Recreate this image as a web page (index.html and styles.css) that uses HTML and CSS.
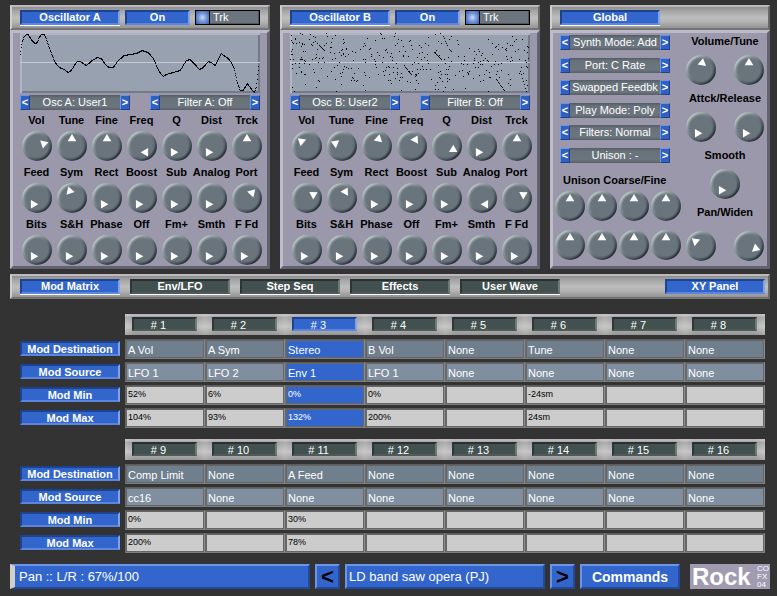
FILE: index.html
```html
<!DOCTYPE html>
<html lang="en">
<head>
<meta charset="utf-8">
<title>Synth Editor</title>
<link rel="stylesheet" href="styles.css">
</head>
<body>
<main class="synth">
  <div class="panels">
    <section class="panel" aria-label="Oscillator A">
      <header class="metal panel-head">
        <button class="key key-blue key-lit">Oscillator A</button>
        <button class="key key-blue key-on">On</button>
        <label class="track"><input type="checkbox"><span>Trk</span></label>
      </header>
      <div class="panel-body">
        <svg class="scope" id="scope-a" viewBox="0 0 240 60" preserveAspectRatio="none" role="img" aria-label="Waveform A"></svg>
        <div class="selectors">
          <div class="selector"><button aria-label="Previous oscillator">&lt;</button><span>Osc A: User1</span><button aria-label="Next oscillator">&gt;</button></div>
          <div class="selector"><button aria-label="Previous filter">&lt;</button><span>Filter A: Off</span><button aria-label="Next filter">&gt;</button></div>
        </div>
        <div class="knobs" id="knobs-a"></div>
      </div>
    </section>

    <section class="panel" aria-label="Oscillator B">
      <header class="metal panel-head">
        <button class="key key-blue key-lit">Oscillator B</button>
        <button class="key key-blue key-on">On</button>
        <label class="track"><input type="checkbox"><span>Trk</span></label>
      </header>
      <div class="panel-body">
        <svg class="scope" id="scope-b" viewBox="0 0 240 60" preserveAspectRatio="none" role="img" aria-label="Waveform B"></svg>
        <div class="selectors">
          <div class="selector"><button aria-label="Previous oscillator">&lt;</button><span>Osc B: User2</span><button aria-label="Next oscillator">&gt;</button></div>
          <div class="selector"><button aria-label="Previous filter">&lt;</button><span>Filter B: Off</span><button aria-label="Next filter">&gt;</button></div>
        </div>
        <div class="knobs" id="knobs-b"></div>
      </div>
    </section>

    <section class="panel" aria-label="Global">
      <header class="metal panel-head">
        <button class="key key-blue key-lit">Global</button>
      </header>
      <div class="panel-body global">
        <div class="global-left">
          <div class="modes">
            <div class="selector"><button aria-label="Previous synth mode">&lt;</button><span>Synth Mode: Add</span><button aria-label="Next synth mode">&gt;</button></div>
            <div class="selector"><button aria-label="Previous port">&lt;</button><span>Port: C Rate</span><button aria-label="Next port">&gt;</button></div>
            <div class="selector"><button aria-label="Previous feedback">&lt;</button><span>Swapped Feedbk</span><button aria-label="Next feedback">&gt;</button></div>
            <div class="selector"><button aria-label="Previous play mode">&lt;</button><span>Play Mode: Poly</span><button aria-label="Next play mode">&gt;</button></div>
            <div class="selector"><button aria-label="Previous filters">&lt;</button><span>Filters: Normal</span><button aria-label="Next filters">&gt;</button></div>
            <div class="selector"><button aria-label="Previous unison">&lt;</button><span>Unison : -</span><button aria-label="Next unison">&gt;</button></div>
          </div>
          <h2 class="caption unison-caption">Unison Coarse/Fine</h2>
          <div class="unison" id="unison"></div>
        </div>
        <div class="global-right" id="global-right"></div>
      </div>
    </section>
  </div>

  <nav class="metal tabs">
    <button class="key key-blue key-lit">Mod Matrix</button>
    <button class="key key-dark key-lit">Env/LFO</button>
    <button class="key key-dark key-lit">Step Seq</button>
    <button class="key key-dark key-lit">Effects</button>
    <button class="key key-dark key-lit">User Wave</button>
    <button class="key key-blue tab-end">XY Panel</button>
  </nav>

  <div class="matrix" id="matrix"></div>

  <footer class="status">
    <output class="readout readout-param">Pan :: L/R : 67%/100</output>
    <button class="raised step" aria-label="Previous preset">&lt;</button>
    <input class="readout preset" type="text" value="LD band saw opera (PJ)" aria-label="Preset name">
    <button class="raised step" aria-label="Next preset">&gt;</button>
    <button class="raised commands">Commands</button>
    <div class="logo"><strong>Rock</strong><span>CO<br>FX<br>04</span></div>
  </footer>
</main>
<script src="app.js"></script>
</body>
</html>
```
FILE: styles.css
```css
* { box-sizing: border-box; }

body {
  margin: 0;
  background: #333;
  font-family: "Liberation Sans", Arial, sans-serif;
  font-size: 11px;
}

button, input, select {
  margin: 0;
  border: 0;
  border-radius: 0;
  padding: 0;
  font: inherit;
  color: inherit;
  appearance: none;
}

.synth { padding: 5px 7px 5px 10px; }

.metal {
  background: linear-gradient(#8e8e8e, #a6a6a6 20%, #bdbdbd 50%, #b4b4b4 70%, #939393);
  border: 2px solid;
  border-color: #bdb9bd #686868 #747474 #cfcfcf;
}

/* Panels */
.panels {
  display: grid;
  grid-template-columns: 260fr 260fr 220fr;
  gap: 10px;
}

.panel { display: flex; flex-direction: column; }

.panel-head {
  display: flex;
  gap: 5px;
  height: 25px;
  padding: 3px 8px;
}

.panel-body {
  flex: 1;
  height: 240px;
  padding: 0 7px;
  background: #9a98aa;
  border: 3px solid;
  border-color: #bcbac8 #62616f #62616f #bebcc9;
}

.key {
  width: 100px;
  height: 15px;
  border: 2px solid;
  color: #fff;
  font-weight: bold;
  line-height: 11px;
  text-align: center;
}

.key-lit { box-shadow: 0 1px #fff; }
.key-on { width: 65px; }

.track {
  display: flex;
  width: 65px;
  height: 15px;
  background: #6c757e;
  border: 1px solid #000;
  color: #fff;
  line-height: 13px;
  box-shadow: inset -1px -1px #4d555d;
}

.track input {
  width: 14px;
  height: 13px;
  border-right: 1px solid #000;
  background: radial-gradient(circle at 50% 50%, #cbdcfa, #7798d8 45%, #3359ac);
}

.track span { margin-left: 3px; }

.scope {
  display: block;
  width: 100%;
  height: 60px;
  background: #97a1b0;
  box-shadow: inset 2px 2px #b0b7c2, inset -2px -2px #747a86;
  overflow: visible;
}

.scope-axis { stroke: #c4cad2; }
.scope-dots { stroke: #000; stroke-width: 1; shape-rendering: crispEdges; fill: none; }

.selectors {
  display: flex;
  justify-content: space-between;
  margin-top: 2px;
}

.selector {
  display: flex;
  width: 110px;
  height: 15px;
  background: linear-gradient(#545c64, #68727b 20%, #6c757e 80%, #565e66);
  color: #fff;
  line-height: 15px;
}

.selector span { flex: 1; text-align: center; white-space: nowrap; }

.selector button {
  width: 10px;
  height: 15px;
  background: #3060c4;
  border: 1px solid;
  border-color: #6d95e6 #1d438f #1d438f #6d95e6;
  font-weight: bold;
  line-height: 13px;
}

.knobs {
  display: grid;
  grid-template-columns: repeat(7, minmax(0, 1fr));
  row-gap: 3px;
  margin: 2px -4px 0 -1px;
}

.knob {
  display: flex;
  flex-direction: column;
  align-items: center;
  gap: 3px;
}

.knob-name, .caption {
  margin: 0;
  color: #000;
  font-size: 11px;
  font-weight: bold;
  line-height: 16px;
  white-space: nowrap;
}

.dial {
  position: relative;
  display: block;
  width: 30px;
  height: 30px;
}

.dial input {
  display: block;
  width: 30px;
  height: 30px;
  border-radius: 50%;
  background:
    radial-gradient(circle, #6a747c 11px, transparent 14px),
    linear-gradient(135deg, #c8d6d4 10%, #8f9c9f 32%, #56616a 60%, #1d272b 88%);
}

.dial input::-webkit-slider-thumb { appearance: none; width: 0; height: 0; }

.dial svg {
  position: absolute;
  inset: 0;
  width: 30px;
  height: 30px;
  fill: #fff;
  pointer-events: none;
}

/* Global panel */
.global {
  display: flex;
  justify-content: space-between;
  padding: 0 3px 0 2px;
}

.global-left { width: 128px; }

.modes {
  display: flex;
  flex-direction: column;
  justify-content: space-between;
  height: 128px;
  margin: 2px 0 0 5px;
}

.unison-caption { margin: 9px 0 3px 8px; }

.unison {
  display: grid;
  grid-template-columns: repeat(4, 1fr);
  row-gap: 9px;
}

.global-right { width: 78px; }

.group {
  display: flex;
  flex-direction: column;
  align-items: center;
  gap: 6px;
  margin-bottom: 5px;
}

.group-spread { gap: 11px; }

.group-dials {
  display: flex;
  justify-content: space-between;
  width: 100%;
}

.group-single { justify-content: center; }

/* Tabs */
.tabs {
  display: flex;
  gap: 10px;
  height: 25px;
  margin-top: 5px;
  padding: 3px 3px 3px 8px;
}

.tab-end { margin-left: auto; }

/* Modulation matrix */
.matrix {
  display: flex;
  flex-direction: column;
  gap: 8px;
  margin: 15px 5px 0 10px;
}

.mod-table {
  width: 100%;
  table-layout: fixed;
  border-collapse: collapse;
}

.mod-table th, .mod-table td { padding: 0; text-align: left; }
.mod-corner { width: 105px; }
.mod-table thead { height: 25px; }
.mod-table thead th { vertical-align: top; font-weight: normal; }

.slot-bar {
  height: 21px;
  padding: 3px 8px 3px 7px;
  background: linear-gradient(90deg, rgba(255, 255, 255, .2), transparent 12%, transparent 88%, rgba(255, 255, 255, .2)), linear-gradient(#b9b5b9 2px, #999 3px, #bcbcbc 60%, #949494);
}

.slot {
  display: block;
  width: 100%;
  height: 14px;
  padding-right: 12px;
  border: 2px solid;
  color: #fff;
  line-height: 12px;
  text-align: center;
}

.mod-table tbody tr { height: 23px; }
.mod-table tbody th, .mod-table tbody td { vertical-align: top; }

.row-name {
  width: 100px;
  height: 15px;
  margin-top: 2px;
  border: 2px solid;
  color: #fff;
  line-height: 12px;
  text-align: center;
}

.field {
  display: block;
  width: 100%;
  height: 20px;
  padding: 1px 1px 0;
  border: 2px solid;
  border-color: #5c5c5c #8a8a8a #7d7d7d #6a6a6a;
  outline: 1px solid #666;
  outline-offset: -2px;
  color: #fff;
}

.field-dest { background: #6f7f8e; }
.field-source { background: #7f8f9f; }
.field-value { padding: 0 1px 2px; background: #ccc; color: #000; font-size: 9px; }
.field-active { background: #3366cc; color: #fff; }

/* Key colours */
.key-blue {
  background: #3366cc;
  border-color: #1d438f #80a2e8 #5c86de #1d438f;
}

.key-dark {
  background: #435050;
  border-color: #273131 #6c7979 #4d5a5a #2b3636;
}

/* Status row */
.status {
  display: grid;
  grid-template-columns: 300fr 25px 200fr 25px 100px 85px;
  column-gap: 5px;
  height: 25px;
  margin-top: 8px;
}

.raised, .readout {
  min-width: 0;
  height: 25px;
  background: #3366cc;
  border: 2px solid;
  border-color: #6d95e6 #23499a #23499a #6d95e6;
  color: #fff;
}

.readout { padding: 0 2px; font-size: 13px; line-height: 21px; }
.readout-param { border-left: 5px solid #d4d0c8; padding-left: 4px; }
.step { color: #000; font-size: 22px; font-weight: bold; line-height: 20px; }
.commands { font-size: 14px; font-weight: bold; }

.logo {
  display: flex;
  align-items: center;
  justify-content: space-between;
  margin-left: 5px;
  padding: 0 1px 0 2px;
  background: #a19bb2;
  color: #fff;
}

.logo strong { font-size: 24px; line-height: 25px; }
.logo span { font-size: 8px; line-height: 8px; }
```
FILE: app.js
```js
const MIN = -150;

const oscA = [
  ["Vol", 72], ["Tune", 0], ["Fine", 0], ["Freq", 150], ["Q", MIN], ["Dist", MIN], ["Trck", 0],
  ["Feed", MIN], ["Sym", -18], ["Rect", MIN], ["Boost", MIN], ["Sub", MIN], ["Analog", MIN], ["Port", 43],
  ["Bits", MIN], ["S&H", MIN], ["Phase", MIN], ["Off", MIN], ["Fm+", MIN], ["Smth", MIN], ["F Fd", MIN]
];

const oscB = [
  ["Vol", -50], ["Tune", -68], ["Fine", 12], ["Freq", 28], ["Q", 120], ["Dist", MIN], ["Trck", 0],
  ["Feed", 62], ["Sym", 28], ["Rect", MIN], ["Boost", MIN], ["Sub", MIN], ["Analog", 150], ["Port", 62],
  ["Bits", MIN], ["S&H", MIN], ["Phase", MIN], ["Off", MIN], ["Fm+", MIN], ["Smth", MIN], ["F Fd", MIN]
];

const groups = [
  { name: "Volume/Tune", dials: [["Volume", 10], ["Tune", 0]] },
  { name: "Attck/Release", dials: [["Attack", MIN], ["Release", MIN]] },
  { name: "Smooth", dials: [["Smooth", MIN]] },
  { name: "Pan/Widen", dials: [["Pan", -50], ["Widen", 110]], spread: true }
];

const esc = s => s.replace(/&/g, "&amp;");
const byId = id => document.getElementById(id);

function dial(angle, name) {
  const label = name ? ` aria-label="${name}"` : "";
  return `<span class="dial"><input type="range" min="-150" max="150" value="${angle}"${label}>` +
    `<svg viewBox="0 0 30 30" aria-hidden="true"><path d="M15 3 L19.3 10.2 H10.7 Z" transform="rotate(${angle} 15 15)"/></svg></span>`;
}

const knob = ([name, angle]) =>
  `<label class="knob"><span class="knob-name">${esc(name)}</span>${dial(angle)}</label>`;

byId("knobs-a").innerHTML = oscA.map(knob).join("");
byId("knobs-b").innerHTML = oscB.map(knob).join("");
byId("unison").innerHTML = Array.from({ length: 8 }, (_, i) =>
  dial(0, `Unison ${i < 4 ? "coarse" : "fine"} ${i % 4 + 1}`)).join("");
byId("global-right").innerHTML = groups.map(g =>
  `<div class="group${g.spread ? " group-spread" : ""}"><h2 class="caption">${g.name}</h2>` +
  `<div class="group-dials${g.dials.length === 1 ? " group-single" : ""}">` +
  g.dials.map(([n, a]) => dial(a, n)).join("") + "</div></div>").join("");

/* Waveform displays: a dotted curve for A, scattered samples for B */
function drawScope(id, dots) {
  byId(id).innerHTML = '<path class="scope-axis" d="M0 29.5H240"/>' +
    `<path class="scope-dots" d="${dots.map(([x, y]) => `M${x} ${y + 0.5}h1`).join("")}"/>`;
}

const curve = [
  [0, 21], [1, 14], [2, 8], [4, 3], [6, 1], [8, 1], [11, 6], [15, 10], [17, 9], [19, 4], [21, 1], [24, 1],
  [26, 5], [29, 14], [32, 22], [35, 29], [39, 34], [44, 36], [48, 39], [51, 37], [54, 32], [57, 28], [60, 28],
  [66, 32], [72, 27], [77, 24], [81, 25], [86, 32], [89, 34], [93, 34], [98, 27], [104, 22], [116, 20],
  [122, 17], [128, 19], [133, 25], [139, 38], [143, 43], [146, 41], [153, 39], [160, 37], [166, 27], [170, 26],
  [175, 31], [179, 36], [183, 34], [188, 28], [191, 29], [195, 32], [198, 26], [201, 20], [205, 23], [208, 25],
  [211, 29], [214, 35], [217, 49], [220, 57], [223, 57], [227, 50], [230, 54], [234, 59], [236, 54],
  [238, 37], [239, 29]
];

const waveA = [];
for (let i = 0; i < curve.length - 1; i++) {
  const [x0, y0] = curve[i];
  const [x1, y1] = curve[i + 1];
  for (let x = x0; x < x1; x += 0.5) {
    const t = (x - x0) / (x1 - x0);
    waveA.push([Math.floor(x), Math.round(y0 + (y1 - y0) * t)]);
  }
}
drawScope("scope-a", waveA);

let seed = 20047;
const random = () => (seed = (seed * 16807) % 2147483647) / 2147483647;
const waveB = [];
for (let i = 0; i < 430; i++) {
  const x = Math.floor(random() * 239);
  const mean = x < 200 ? 17 + x * 0.11 : 28;
  const y = Math.round(mean + (random() + random() + random() - 1.5) * 36);
  if (y >= 0 && y < 59) waveB.push([x, y]);
}
const streaks = [[144, 19, 151, 26], [153, 3, 157, 12], [115, 34, 121, 41], [206, 46, 214, 57], [230, 38, 236, 58], [29, 12, 34, 17]];
for (const [x0, y0, x1, y1] of streaks) {
  for (let x = x0; x <= x1; x++) {
    waveB.push([x, Math.round(y0 + (y1 - y0) * (x - x0) / (x1 - x0))]);
  }
}
drawScope("scope-b", waveB);

/* Modulation matrix */
const banks = [
  {
    first: 1, active: 3,
    dest: ["A Vol", "A Sym", "Stereo", "B Vol", "None", "Tune", "None", "None"],
    source: ["LFO 1", "LFO 2", "Env 1", "LFO 1", "None", "None", "None", "None"],
    min: ["52%", "6%", "0%", "0%", "", "-24sm", "", ""],
    max: ["104%", "93%", "132%", "200%", "", "24sm", "", ""]
  },
  {
    first: 9, active: 0,
    dest: ["Comp Limit", "None", "A Feed", "None", "None", "None", "None", "None"],
    source: ["cc16", "None", "None", "None", "None", "None", "None", "None"],
    min: ["0%", "", "30%", "", "", "", "", ""],
    max: ["200%", "", "78%", "", "", "", "", ""]
  }
];

const rows = [["dest", "Mod Destination"], ["source", "Mod Source"], ["min", "Mod Min"], ["max", "Mod Max"]];

byId("matrix").innerHTML = banks.map(bank => {
  const head = bank.dest.map((_, i) => {
    const n = bank.first + i;
    return `<th scope="col"><div class="slot-bar"><button class="slot ${n === bank.active ? "key-blue" : "key-dark"}"># ${n}</button></div></th>`;
  }).join("");
  const body = rows.map(([key, name]) => {
    const cells = bank[key].map((value, i) => {
      const n = bank.first + i;
      const active = n === bank.active ? " field-active" : "";
      const label = `${name} ${n}`;
      return "<td>" + (key === "dest" || key === "source"
        ? `<select class="field field-${key}${active}" aria-label="${label}"><option>${value}</option></select>`
        : `<input class="field field-value${active}" type="text" value="${value}" aria-label="${label}">`) + "</td>";
    }).join("");
    return `<tr><th scope="row"><div class="row-name key-blue">${name}</div></th>${cells}</tr>`;
  }).join("");
  return `<table class="mod-table"><thead><tr><td class="mod-corner"></td>${head}</tr></thead><tbody>${body}</tbody></table>`;
}).join("");
```
